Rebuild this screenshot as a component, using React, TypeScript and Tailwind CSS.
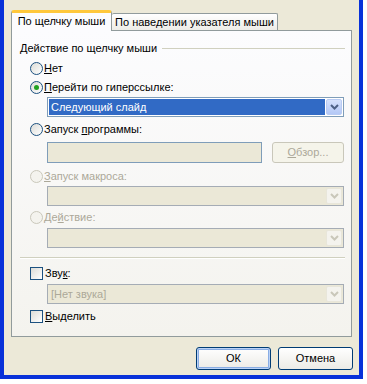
import type { ReactNode } from 'react';

const FONT = { fontFamily: '"Liberation Sans", Tahoma, Arial, sans-serif' };

function Chevron({ disabled }: { disabled?: boolean }) {
  return (
    <svg width="9" height="6" viewBox="0 0 9 6">
      <path d="M1 1 L4.5 4.5 L8 1" fill="none" stroke={disabled ? '#C9C7BA' : '#4D6185'} strokeWidth="2" />
    </svg>
  );
}

function Radio({ checked, disabled, children }: { checked?: boolean; disabled?: boolean; children: ReactNode }) {
  return (
    <div className="flex h-[13px] items-center">
      <div
        className={`ml-[18px] flex h-[13px] w-[13px] items-center justify-center rounded-full border ${
          disabled ? 'border-[#CAC8BB] bg-[#F4F3EE]' : 'border-[#1C5180] bg-linear-to-br from-[#DCDCD7] to-white'
        }`}
      >
        {checked && <div className="h-[5px] w-[5px] rounded-full bg-[#21A121]" />}
      </div>
      <span className={`ml-[1px] whitespace-nowrap leading-[13px] ${disabled ? 'text-[#ACA899]' : 'text-black'}`}>{children}</span>
    </div>
  );
}

function Check({ children }: { children: ReactNode }) {
  return (
    <div className="flex h-[13px] items-center">
      <div className="ml-[18px] h-[13px] w-[13px] border border-[#1C5180] bg-linear-to-br from-[#DCDCD7] to-white" />
      <span className="ml-[2px] whitespace-nowrap leading-[13px] text-black">{children}</span>
    </div>
  );
}

function Combo({ value, selected, mt }: { value?: string; selected?: boolean; mt: string }) {
  return (
    <div
      className={`${mt} ml-[35px] mr-[7px] flex h-[20px] items-center border ${
        selected ? 'border-[#7F9DB9] bg-white' : 'border-[#A5ACB5] bg-[#EBE8D7]'
      } p-[1px]`}
    >
      <div
        className={`flex h-full flex-1 items-center pl-[2px] ${
          selected ? 'bg-[#316AC5] text-white' : 'text-[#ACA899]'
        }`}
      >
        {value}
      </div>
      <div
        className={`ml-[1px] flex h-full w-[16px] items-center justify-center rounded-[2px] border ${
          selected ? 'border-[#B9CBF3] bg-linear-to-b from-[#D6E2FC] to-[#B4C8F6]' : 'border-[#E8E6DA] bg-[#F4F3EE]'
        }`}
      >
        <Chevron disabled={!selected} />
      </div>
    </div>
  );
}

export default function App() {
  return (
    <div className="h-[384px] w-[367px] bg-white text-[11px]" style={FONT}>
      <div className="flex h-[379px] w-[363px] flex-col border-x-4 border-b-4 border-[#0831D9] bg-[#ECE9D8]">
        {/* Tabs */}
        <div className="ml-[7px] mt-[10px] flex h-[21px] items-end">
          <div className="relative z-10 flex h-[21px] w-[101px] items-center justify-center whitespace-nowrap rounded-t-[3px] border-x border-t-[3px] border-x-[#919B9C] border-t-[#FFC83C] bg-[#FCFCFE] pb-[1px]">
            По щелчку мыши
          </div>
          <div className="flex h-[18px] w-[166px] items-center justify-center whitespace-nowrap rounded-t-[2px] border border-b-0 border-l-0 border-[#919B9C] bg-linear-to-b from-white to-[#ECEBE6]">
            По наведении указателя мыши
          </div>
        </div>

        {/* Panel */}
        <div className="-mt-px ml-[7px] flex h-[307px] w-[341px] flex-col border border-[#919B9C] bg-linear-to-b from-[#FCFCFE] to-[#F4F3EE]">
          <div className="ml-[8px] mr-[6px] mt-[10px] flex h-[14px] items-center">
            <span className="whitespace-nowrap pr-[5px]">Действие по щелчку мыши</span>
            <div className="h-px flex-1 bg-[#D0D0BF]" />
          </div>

          <div className="mt-[7px]">
            <Radio>
              <u>Н</u>ет
            </Radio>
          </div>
          <div className="mt-[6px]">
            <Radio checked>
              <u>П</u>ерейти по гиперссылке:
            </Radio>
          </div>
          <Combo mt="mt-[3px]" value="Следующий слайд" selected />

          <div className="mt-[6px]">
            <Radio>
              Запуск <u>п</u>рограммы:
            </Radio>
          </div>
          <div className="ml-[35px] mr-[7px] mt-[6px] flex h-[21px] gap-[10px]">
            <div className="h-full w-[215px] border border-[#7F9DB9] bg-[#EBE8D7]" />
            <div className="flex h-full flex-1 items-center justify-center rounded-[3px] border border-[#C9C7BA] bg-[#F5F4EA] text-[#ACA899]">
              <span>
                <u>О</u>бзор...
              </span>
            </div>
          </div>

          <div className="mt-[7px]">
            <Radio disabled>
              <u>З</u>апуск макроса:
            </Radio>
          </div>
          <Combo mt="mt-[3px]" />

          <div className="mt-[5px]">
            <Radio disabled>
              Де<u>й</u>ствие:
            </Radio>
          </div>
          <Combo mt="mt-[4px]" />

          <div className="ml-[8px] mr-[6px] mt-[9px] border-t border-b border-t-[#D0D0BF] border-b-white" />

          <div className="mt-[8px]">
            <Check>
              Зву<u>к</u>:
            </Check>
          </div>
          <Combo mt="mt-[4px]" value="[Нет звука]" />

          <div className="mt-[6px]">
            <Check>
              <u>В</u>ыделить
            </Check>
          </div>
        </div>

        {/* Buttons */}
        <div className="ml-[192px] mt-[10px] flex gap-[7px]">
          <button className="flex h-[23px] w-[75px] items-center justify-center rounded-[3px] border border-[#003C74] bg-linear-to-b from-white to-[#ECEBE6] shadow-[inset_0_0_0_1px_#BBD2F6,inset_0_0_0_2px_#89ADE4]">
            ОК
          </button>
          <button className="flex h-[23px] w-[75px] items-center justify-center rounded-[3px] border border-[#003C74] bg-linear-to-b from-white to-[#ECEBE6]">
            Отмена
          </button>
        </div>
      </div>
    </div>
  );
}
